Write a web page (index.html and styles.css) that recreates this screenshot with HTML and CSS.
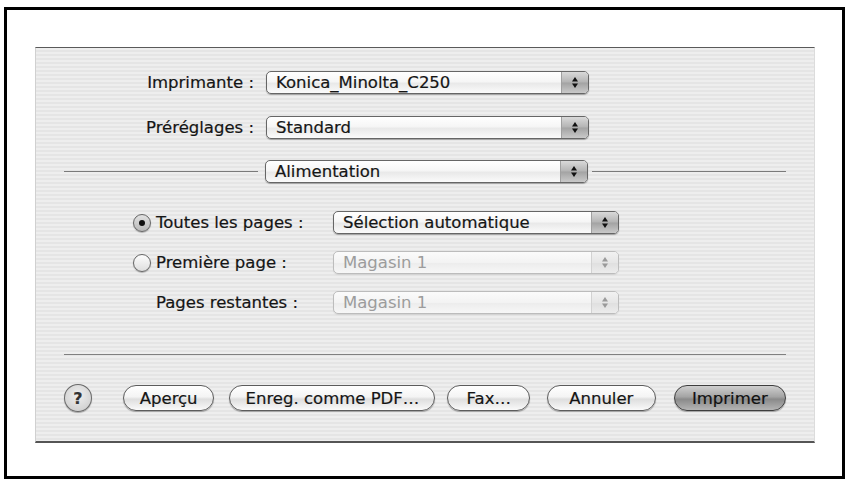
FILE: index.html
```html
<!DOCTYPE html>
<html lang="fr">
<head>
  <meta charset="UTF-8" />
  <title>Imprimer</title>
  <link rel="stylesheet" href="styles.css">
</head>
<body>
  <div class="frame">
    <div class="sheet">

      <div class="field-row">
        <span class="label">Imprimante :</span>
        <div class="popup">
          <span class="value">Konica_Minolta_C250</span>
          <span class="stepper"><svg width="6" height="11" viewBox="0 0 6 11"><polygon points="3,0 6,4.5 0,4.5"/><polygon points="0,6.5 6,6.5 3,11"/></svg></span>
        </div>
      </div>

      <div class="field-row">
        <span class="label">Préréglages :</span>
        <div class="popup">
          <span class="value">Standard</span>
          <span class="stepper"><svg width="6" height="11" viewBox="0 0 6 11"><polygon points="3,0 6,4.5 0,4.5"/><polygon points="0,6.5 6,6.5 3,11"/></svg></span>
        </div>
      </div>

      <div class="pane-row">
        <span class="rule left"></span>
        <div class="popup">
          <span class="value">Alimentation</span>
          <span class="stepper"><svg width="6" height="11" viewBox="0 0 6 11"><polygon points="3,0 6,4.5 0,4.5"/><polygon points="0,6.5 6,6.5 3,11"/></svg></span>
        </div>
        <span class="rule right"></span>
      </div>

      <div class="options">
        <span class="radio checked"></span>
        <span class="opt-label">Toutes les pages :</span>
        <div class="popup">
          <span class="value">Sélection automatique</span>
          <span class="stepper"><svg width="6" height="11" viewBox="0 0 6 11"><polygon points="3,0 6,4.5 0,4.5"/><polygon points="0,6.5 6,6.5 3,11"/></svg></span>
        </div>

        <span class="radio"></span>
        <span class="opt-label">Première page :</span>
        <div class="popup disabled">
          <span class="value">Magasin 1</span>
          <span class="stepper"><svg width="6" height="11" viewBox="0 0 6 11"><polygon points="3,0 6,4.5 0,4.5"/><polygon points="0,6.5 6,6.5 3,11"/></svg></span>
        </div>

        <span></span>
        <span class="opt-label">Pages restantes :</span>
        <div class="popup disabled">
          <span class="value">Magasin 1</span>
          <span class="stepper"><svg width="6" height="11" viewBox="0 0 6 11"><polygon points="3,0 6,4.5 0,4.5"/><polygon points="0,6.5 6,6.5 3,11"/></svg></span>
        </div>
      </div>

      <div class="divider"></div>

      <div class="actions">
        <span class="help">?</span>
        <button class="btn apercu">Aperçu</button>
        <button class="btn pdf">Enreg. comme PDF…</button>
        <button class="btn fax">Fax…</button>
        <button class="btn annuler">Annuler</button>
        <button class="btn default">Imprimer</button>
      </div>

    </div>
  </div>
</body>
</html>
```

FILE: styles.css
```css
* {
  box-sizing: border-box;
  font-family: 'DejaVu Sans', 'Liberation Sans', sans-serif;
}

body {
  margin: 0;
  background: #fff;
  color: #151515;
  font-size: 16.5px;
  -webkit-text-stroke: 0.2px currentColor;
}

.frame {
  width: 841px;
  height: 472px;
  margin: 7px 0 0 4px;
  border: 3px solid #000;
  padding: 37px 0 0 28px;
}

.sheet {
  width: 780px;
  height: 396px;
  padding: 23px 28px 0;
  border-top: 1px solid #5a5a5a;
  border-bottom: 2px solid #555;
  border-left: 1px solid #d0d0d0;
  border-right: 1px solid #dcdcdc;
  background: repeating-linear-gradient(to bottom, #eeeeee 0 2px, #e5e5e5 2px 4px);
}

/* ---- popup menus ---- */
.popup {
  display: flex;
  height: 23px;
  border: 1px solid #666;
  border-radius: 5px;
  overflow: hidden;
  background: linear-gradient(#ffffff, #f6f6f6 45%, #e9e9e9 55%, #fbfbfb);
  box-shadow: 0 1px 1px rgba(0,0,0,0.3);
}

.popup .value {
  flex: 1;
  padding-left: 9px;
  line-height: 21px;
  white-space: nowrap;
}

.stepper {
  width: 27px;
  display: flex;
  align-items: center;
  justify-content: center;
  border-left: 1px solid #a0a0a0;
  background: linear-gradient(#d9d9d9, #b4b4b4 48%, #a3a3a3 52%, #c9c9c9);
}

.stepper svg {
  fill: #111;
}

.popup.disabled {
  border-color: #bcbcbc;
  box-shadow: 0 1px 1px rgba(0,0,0,0.08);
  background: linear-gradient(#fbfbfb, #f3f3f3 50%, #ececec 52%, #f7f7f7);
}

.popup.disabled .value {
  color: #9c9c9c;
  -webkit-text-stroke: 0;
}

.popup.disabled .stepper {
  border-left-color: #d2d2d2;
  background: linear-gradient(#f1f1f1, #e6e6e6 50%, #dfdfdf 52%, #ececec);
}

.popup.disabled .stepper svg {
  fill: #9a9a9a;
}

/* ---- top rows ---- */
.field-row {
  display: grid;
  grid-template-columns: 202px 323px;
  align-items: center;
  margin-bottom: 22px;
}

.field-row .label {
  text-align: right;
  padding-right: 12px;
}

.pane-row {
  display: flex;
  align-items: center;
  margin-top: -1px;
}

.pane-row .popup {
  width: 323px;
}

.rule {
  flex: 1;
  height: 1px;
  background: #7a7a7a;
}

.rule.left {
  margin-right: 7px;
}

.rule.right {
  margin-left: 4px;
}

/* ---- radio options ---- */
.options {
  display: grid;
  grid-template-columns: 23px 177px 286px;
  row-gap: 17px;
  align-items: center;
  margin: 28px 0 0 69px;
}

.radio {
  width: 18px;
  height: 18px;
  border-radius: 50%;
  border: 1px solid #666;
  background: linear-gradient(#fdfdfd, #dedede);
  box-shadow: 0 1px 1px rgba(0,0,0,0.25);
  display: flex;
  align-items: center;
  justify-content: center;
}

.radio.checked {
  background: linear-gradient(#e2e2e2, #b9b9b9);
}

.radio.checked::after {
  content: "";
  width: 6px;
  height: 6px;
  border-radius: 50%;
  background: #111;
}

.opt-label {
  white-space: nowrap;
}

.divider {
  height: 1px;
  margin-top: 40px;
  background: #808080;
}

/* ---- buttons ---- */
.actions {
  display: flex;
  align-items: center;
  margin-top: 29px;
  height: 28px;
}

.help {
  width: 28px;
  height: 28px;
  border-radius: 50%;
  border: 1px solid #6a6a6a;
  background: radial-gradient(circle at 50% 40%, #f0f0f0, #c8c8c8);
  box-shadow: 0 1px 1px rgba(0,0,0,0.3);
  font-weight: bold;
  font-size: 16px;
  color: #333;
  display: flex;
  align-items: center;
  justify-content: center;
  margin-right: 31px;
}

.btn {
  height: 26px;
  padding: 0;
  border: 1px solid #5c5c5c;
  border-radius: 13px;
  font-size: 16.5px;
  color: #151515;
  -webkit-text-stroke: 0.2px currentColor;
  background: linear-gradient(#ffffff, #f4f4f4 45%, #dedede 55%, #fafafa);
  box-shadow: 0 1px 1px rgba(0,0,0,0.3);
}

.apercu { width: 92px; }
.pdf { width: 207px; margin-left: 15px; }
.fax { width: 83px; margin-left: 12px; }
.annuler { width: 109px; margin-left: 17px; }

.btn.default {
  width: 113px;
  margin-left: 18px;
  border-color: #3e3e3e;
  background: linear-gradient(#cfcfcf, #a4a4a4 45%, #8a8a8a 55%, #b4b4b4);
  color: #111;
}
```
